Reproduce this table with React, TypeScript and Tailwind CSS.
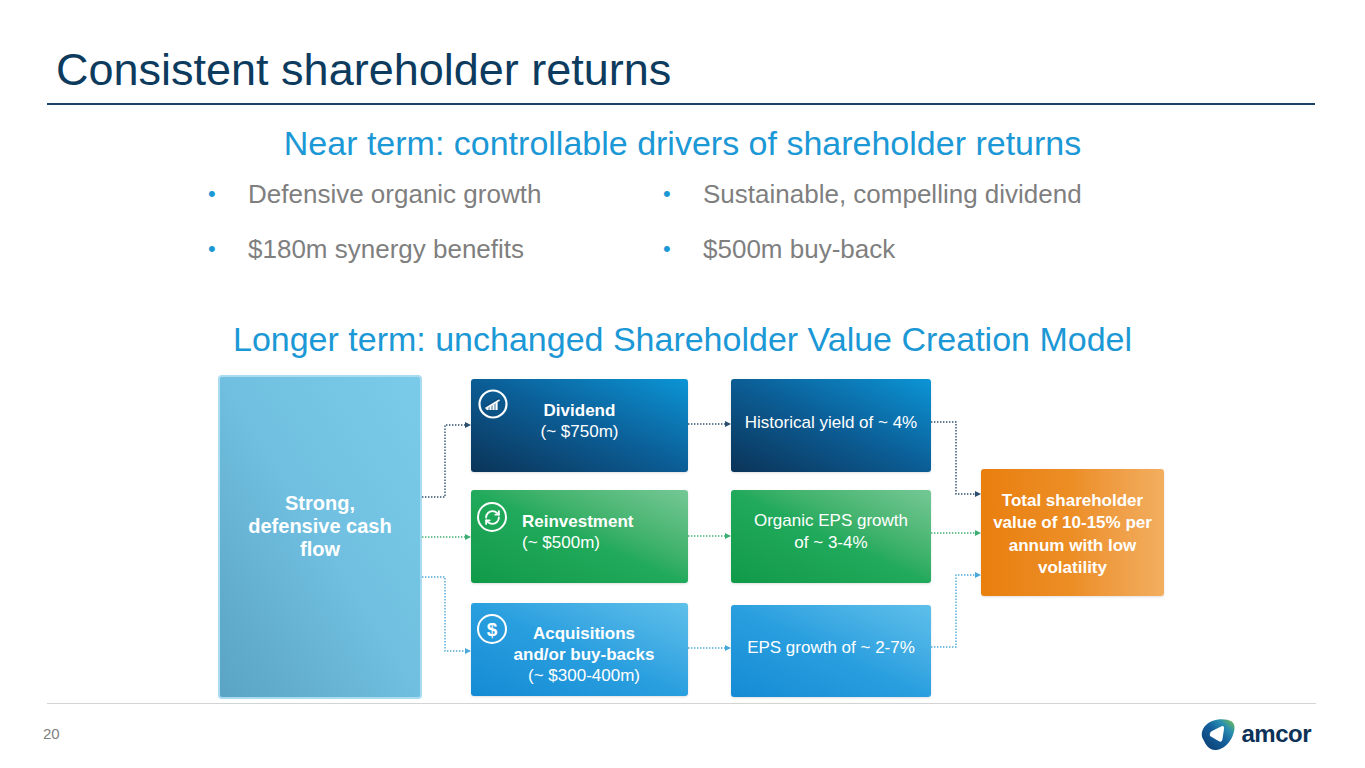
import React from "react";
import { RefreshCw } from "lucide-react";

const NAVY = "#2b4f6e";
const GREEN = "#3fae72";
const BLUE = "#4ba9d9";

function Tip({ x, y, c }: { x: number; y: number; c: string }) {
  return <polygon points={`${x},${y} ${x - 6},${y - 3} ${x - 6},${y + 3}`} fill={c} />;
}

function Dotted({ d, c }: { d: string; c: string }) {
  return <path d={d} stroke={c} strokeWidth={1.4} strokeDasharray="1.4 1.6" fill="none" />;
}

function Conn1() {
  return (
    <svg width="49" height="324" className="shrink-0">
      <Dotted d="M0 122 H23 V50 H44" c={NAVY} />
      <Tip x={49} y={50} c={NAVY} />
      <Dotted d="M0 162 H44" c={GREEN} />
      <Tip x={49} y={162} c={GREEN} />
      <Dotted d="M0 202 H23 V276 H44" c={BLUE} />
      <Tip x={49} y={276} c={BLUE} />
    </svg>
  );
}

function Conn2() {
  return (
    <svg width="43" height="324" className="shrink-0">
      <Dotted d="M0 49 H38" c={NAVY} />
      <Tip x={43} y={49} c={NAVY} />
      <Dotted d="M0 161 H38" c={GREEN} />
      <Tip x={43} y={161} c={GREEN} />
      <Dotted d="M0 273 H38" c={BLUE} />
      <Tip x={43} y={273} c={BLUE} />
    </svg>
  );
}

function Conn3() {
  return (
    <svg width="50" height="324" className="shrink-0">
      <Dotted d="M0 47 H25 V119 H45" c={NAVY} />
      <Tip x={50} y={119} c={NAVY} />
      <Dotted d="M0 158 H45" c={GREEN} />
      <Tip x={50} y={158} c={GREEN} />
      <Dotted d="M0 272 H25 V200 H45" c={BLUE} />
      <Tip x={50} y={200} c={BLUE} />
    </svg>
  );
}

function DividendIcon() {
  return (
    <svg width="30" height="30" viewBox="0 0 30 30" className="absolute left-[7px] top-[10px]">
      <circle cx="15" cy="15" r="13.5" stroke="white" strokeWidth="2.2" fill="none" />
      <path d="M9.5 21v-3 M12.5 21v-5 M15.5 21v-7 M18.5 21v-9" stroke="white" strokeWidth="2.2" fill="none" />
      <path d="M7.5 18.5 L21.5 10" stroke="#0b4a78" strokeWidth="2.8" fill="none" />
      <path d="M7.5 19.5 L21.5 11" stroke="white" strokeWidth="1.5" fill="none" />
    </svg>
  );
}

function ReinvestIcon() {
  return (
    <div className="absolute left-[6px] top-[12px] w-[30px] h-[30px] rounded-full border-2 border-white flex items-center justify-center">
      <RefreshCw size={17} strokeWidth={2.6} color="white" />
    </div>
  );
}

function DollarIcon() {
  return (
    <div className="absolute left-[6px] top-[11px] w-[30px] h-[30px] rounded-full border-2 border-white flex items-center justify-center text-white font-bold text-[19px] leading-none">
      $
    </div>
  );
}

function Logo() {
  return (
    <div className="flex items-center gap-[5px]">
      <svg width="37" height="33" viewBox="0 0 37 33">
        <defs>
          <linearGradient id="amg" x1="0" y1="1" x2="1" y2="0">
            <stop offset="0" stopColor="#0a3a6c" />
            <stop offset="0.5" stopColor="#145f9c" />
            <stop offset="0.75" stopColor="#2a8fb0" />
            <stop offset="1" stopColor="#7cc242" />
          </linearGradient>
        </defs>
        <path d="M4 21 C0 13 7 3 19 1.5 C29 0.5 36 3 35.5 10 C35 19 28 31 17 32 C10 32.5 7 27 4 21 Z" fill="url(#amg)" />
        <path d="M11 18 Q10 15 13 13 L22 8.5 Q25.5 7 25 11 L23.5 21 Q23 25 19.5 23 Z" fill="white" />
      </svg>
      <span className="text-[24px] leading-none font-semibold tracking-[-0.5px] text-[#0d3258] mt-[-2px]">amcor</span>
    </div>
  );
}

export default function App() {
  return (
    <div className="w-[1365px] h-[768px] bg-white overflow-hidden font-['Liberation_Sans',Arial,sans-serif]">
      <header className="pt-[47px] pl-[56px]">
        <h1 className="text-[45px] leading-none text-[#0d3b5e]">Consistent shareholder returns</h1>
      </header>
      <div className="ml-[47px] mr-[50px] mt-[11px] h-[2px] bg-[#1b4263]" />

      <h2 className="mt-[21px] text-center text-[34px] leading-none text-[#1b98d5]">
        Near term: controllable drivers of shareholder returns
      </h2>

      <div className="mt-[21px] pl-[208px] grid grid-cols-[455px_auto] gap-y-[29px] text-[26px] leading-none text-[#7f7f7f]">
        {[
          "Defensive organic growth",
          "Sustainable, compelling dividend",
          "$180m synergy benefits",
          "$500m buy-back",
        ].map((t) => (
          <div key={t} className="flex items-center h-[26px]">
            <span className="w-[40px] text-[22px] text-[#1b98d5]">•</span>
            <span>{t}</span>
          </div>
        ))}
      </div>

      <h2 className="mt-[60px] text-center text-[34px] leading-none text-[#1b98d5]">
        Longer term: unchanged Shareholder Value Creation Model
      </h2>

      <div className="mt-[19px] pl-[218px] flex h-[324px]">
        <div className="w-[204px] h-[324px] rounded-[4px] border-2 border-[#a9dcf1] bg-linear-to-tr from-[#5aa3c4] via-[#70bfe0] to-[#7acbea] flex items-center justify-center pb-[22px] shrink-0">
          <p className="text-white font-bold text-[20px] leading-[23px] text-center">
            Strong,
            <br />
            defensive cash
            <br />
            flow
          </p>
        </div>

        <Conn1 />

        <div className="w-[217px] flex flex-col shrink-0">
          <div className="relative mt-[4px] h-[93px] rounded-[3px] shadow-sm bg-linear-to-tr from-[#0a3458] via-[#0b5d95] to-[#0b95d6] flex items-center justify-center pb-[10px] text-white text-[17px] leading-[21px] text-center">
            <DividendIcon />
            <div>
              <div className="font-bold">Dividend</div>
              <div>(~ $750m)</div>
            </div>
          </div>
          <div className="relative mt-[18px] h-[93px] rounded-[3px] shadow-sm bg-linear-to-tr from-[#0f9a48] via-[#22aa5c] to-[#74c895] flex items-center pl-[51px] pb-[10px] text-white text-[17px] leading-[21px]">
            <ReinvestIcon />
            <div>
              <div className="font-bold">Reinvestment</div>
              <div>(~ $500m)</div>
            </div>
          </div>
          <div className="relative mt-[20px] h-[93px] rounded-[3px] shadow-sm bg-linear-to-tr from-[#138bd4] via-[#2a9fdf] to-[#5ec0ea] flex items-center justify-center pl-[9px] pt-[9px] text-white text-[17px] leading-[21px] text-center">
            <DollarIcon />
            <div>
              <div className="font-bold">Acquisitions</div>
              <div className="font-bold">and/or buy-backs</div>
              <div>(~ $300-400m)</div>
            </div>
          </div>
        </div>

        <Conn2 />

        <div className="w-[200px] flex flex-col shrink-0">
          <div className="mt-[4px] h-[93px] rounded-[3px] shadow-sm bg-linear-to-tr from-[#0a3458] via-[#0b5d95] to-[#0b95d6] flex items-center justify-center pb-[6px] text-white text-[17px] leading-[21px] text-center">
            Historical yield of ~ 4%
          </div>
          <div className="mt-[18px] h-[93px] rounded-[3px] shadow-sm bg-linear-to-tr from-[#0f9a48] via-[#22aa5c] to-[#74c895] flex items-center justify-center pb-[9px] text-white text-[17px] leading-[22px] text-center">
            <div>
              Organic EPS growth
              <br />
              of ~ 3-4%
            </div>
          </div>
          <div className="mt-[22px] h-[92px] rounded-[3px] shadow-sm bg-linear-to-tr from-[#138bd4] via-[#2a9fdf] to-[#5ec0ea] flex items-center justify-center pb-[8px] text-white text-[17px] leading-[21px] text-center">
            EPS growth of ~ 2-7%
          </div>
        </div>

        <Conn3 />

        <div className="mt-[94px] w-[183px] h-[127px] rounded-[3px] shadow-sm bg-linear-to-r from-[#e97f0c] via-[#ec8e25] to-[#f2ae5f] flex items-center justify-center px-[10px] pt-[4px] shrink-0">
          <p className="text-white font-bold text-[17px] leading-[22.5px] text-center">
            Total shareholder value of 10-15% per annum with low volatility
          </p>
        </div>
      </div>

      <div className="ml-[47px] mr-[49px] mt-[4px] h-px bg-[#d4d4d4]" />

      <footer className="flex justify-between items-start pl-[43px] pr-[54px]">
        <span className="mt-[22px] text-[15px] leading-none text-[#7f7f7f]">20</span>
        <div className="mt-[14px]">
          <Logo />
        </div>
      </footer>
    </div>
  );
}
